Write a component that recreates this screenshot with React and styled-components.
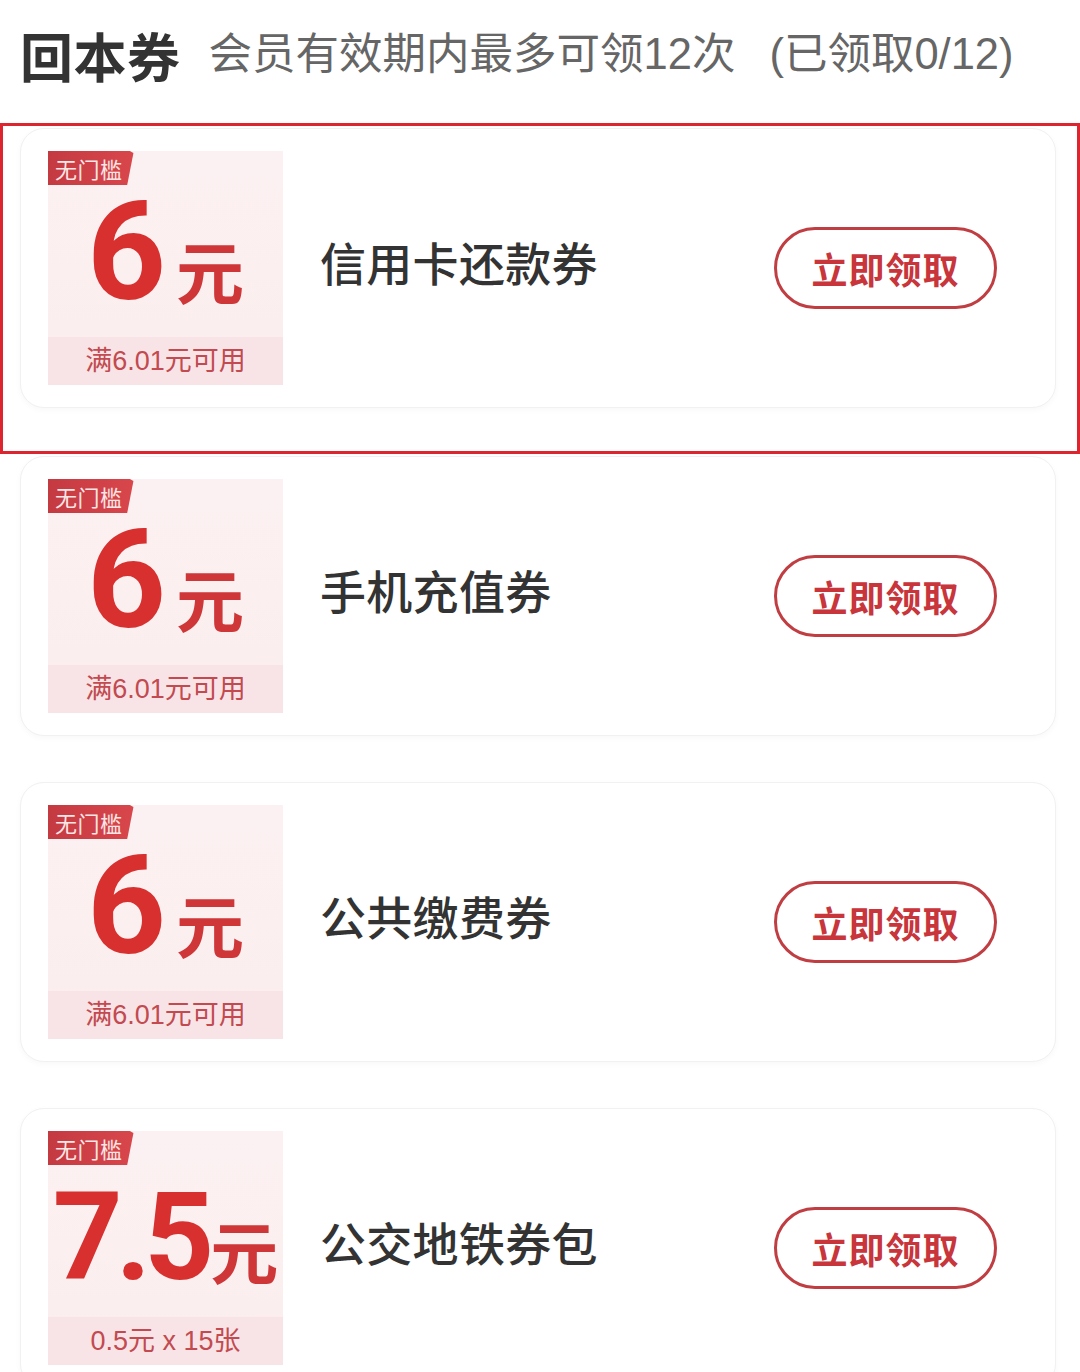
import React from "react";
import styled, { createGlobalStyle } from "styled-components";

const Global = createGlobalStyle`
  html, body { margin: 0; padding: 0; background: #ffffff; }
  body { font-family: "Noto Sans CJK SC", "Noto Sans", sans-serif; }
  * { box-sizing: border-box; }
`;

const Page = styled.div`
  width: 1080px;
  height: 1372px;
  overflow: hidden;
  background: #fff;
`;

const Header = styled.div`
  display: flex;
  align-items: center;
  gap: 28px;
  height: 110px;
  padding: 0 20px;
  margin-bottom: 13px;
  white-space: nowrap;
`;

const Title = styled.h1`
  margin: 0;
  font-size: 53px;
  font-weight: 700;
  color: #333;
  line-height: 1;
  letter-spacing: 0.5px;
`;

const Subtitle = styled.div`
  font-family: "Liberation Sans", "Noto Sans CJK SC", sans-serif;
  font-size: 43.5px;
  color: #666;
  line-height: 1;
`;

const Paren = styled.span`
  margin-left: 34px;
`;

const Highlight = styled.div`
  border: 3px solid #dd2530;
  padding: 2px 21px 43px 17px;
`;

const List = styled.div`
  display: flex;
  flex-direction: column;
  gap: 46px;
  padding: 2px 24px 0 20px;
`;

const Card = styled.div`
  height: 280px;
  display: flex;
  align-items: center;
  padding: 0 58px 0 27px;
  background: #fff;
  border: 1px solid #f1f1f1;
  border-radius: 24px;
  box-shadow: 0 2px 6px rgba(0, 0, 0, 0.03);
`;

const Coupon = styled.div`
  width: 235px;
  height: 234px;
  display: flex;
  flex-direction: column;
  background: linear-gradient(180deg, #fcf1f2 0%, #fbedee 100%);
  flex-shrink: 0;
`;

const Badge = styled.div`
  width: 89px;
  height: 34px;
  display: flex;
  align-items: center;
  padding-left: 7px;
  font-size: 22px;
  color: #fde6e6;
  background: linear-gradient(90deg, #c43a41 0%, #d9474c 100%);
  clip-path: polygon(0 0, 92% 0, 96% 6%, 89% 100%, 0 100%);
  border-radius: 0 6px 6px 0;
  letter-spacing: 0.5px;
  line-height: 1;
`;

const AmountRow = styled.div`
  height: 152px;
  display: flex;
  align-items: baseline;
  justify-content: center;
  padding-top: ${(p) => 114 - Math.round(p.$size * 0.7415)}px;
`;

const Number = styled.span`
  font-family: Roboto, "Liberation Sans", sans-serif;
  font-weight: 700;
  font-size: ${(p) => p.$size}px;
  line-height: 0.8;
  color: #d8302f;
  letter-spacing: ${(p) => (p.$tight ? "-7px" : "0")};
`;

const Unit = styled.span`
  font-size: 68px;
  font-weight: 700;
  line-height: 1;
  color: #cf3638;
  margin-left: ${(p) => (p.$tight ? "3px" : "10px")};
`;

const Strip = styled.div`
  height: 48px;
  display: flex;
  align-items: center;
  justify-content: center;
  background: #f8e4e6;
  font-family: "Liberation Sans", "Noto Sans CJK SC", sans-serif;
  font-size: 27px;
  color: #c24a50;
  line-height: 1;
`;

const Name = styled.div`
  margin-left: 37px;
  margin-top: -14px;
  font-size: 46px;
  font-weight: 500;
  color: #333;
  line-height: 1;
  letter-spacing: 0.3px;
`;

const Button = styled.button`
  margin-left: auto;
  width: 223px;
  height: 82px;
  border: 3px solid #c03d42;
  border-radius: 41px;
  background: #fff;
  font-family: "Noto Sans CJK SC", sans-serif;
  font-size: 36px;
  font-weight: 700;
  color: #c8353b;
  letter-spacing: 1px;
  padding: 0;
  display: flex;
  align-items: center;
  justify-content: center;
  line-height: 1;
`;

const coupons = [
  { amount: "6", size: 138, cond: "满6.01元可用", name: "信用卡还款券" },
  { amount: "6", size: 138, cond: "满6.01元可用", name: "手机充值券" },
  { amount: "6", size: 138, cond: "满6.01元可用", name: "公共缴费券" },
  { amount: "7.5", size: 122, tight: true, cond: "0.5元 x 15张", name: "公交地铁券包" },
];

function CouponCard({ c }) {
  return (
    <Card>
      <Coupon>
        <Badge>无门槛</Badge>
        <AmountRow $size={c.size}>
          <Number $size={c.size} $tight={c.tight}>{c.amount}</Number>
          <Unit $tight={c.tight}>元</Unit>
        </AmountRow>
        <Strip>{c.cond}</Strip>
      </Coupon>
      <Name>{c.name}</Name>
      <Button>立即领取</Button>
    </Card>
  );
}

export default function App() {
  const [first, ...rest] = coupons;
  return (
    <Page>
      <Global />
      <Header>
        <Title>回本券</Title>
        <Subtitle>
          会员有效期内最多可领12次<Paren>(已领取0/12)</Paren>
        </Subtitle>
      </Header>
      <Highlight>
        <CouponCard c={first} />
      </Highlight>
      <List>
        {rest.map((c, i) => (
          <CouponCard key={i} c={c} />
        ))}
      </List>
    </Page>
  );
}
